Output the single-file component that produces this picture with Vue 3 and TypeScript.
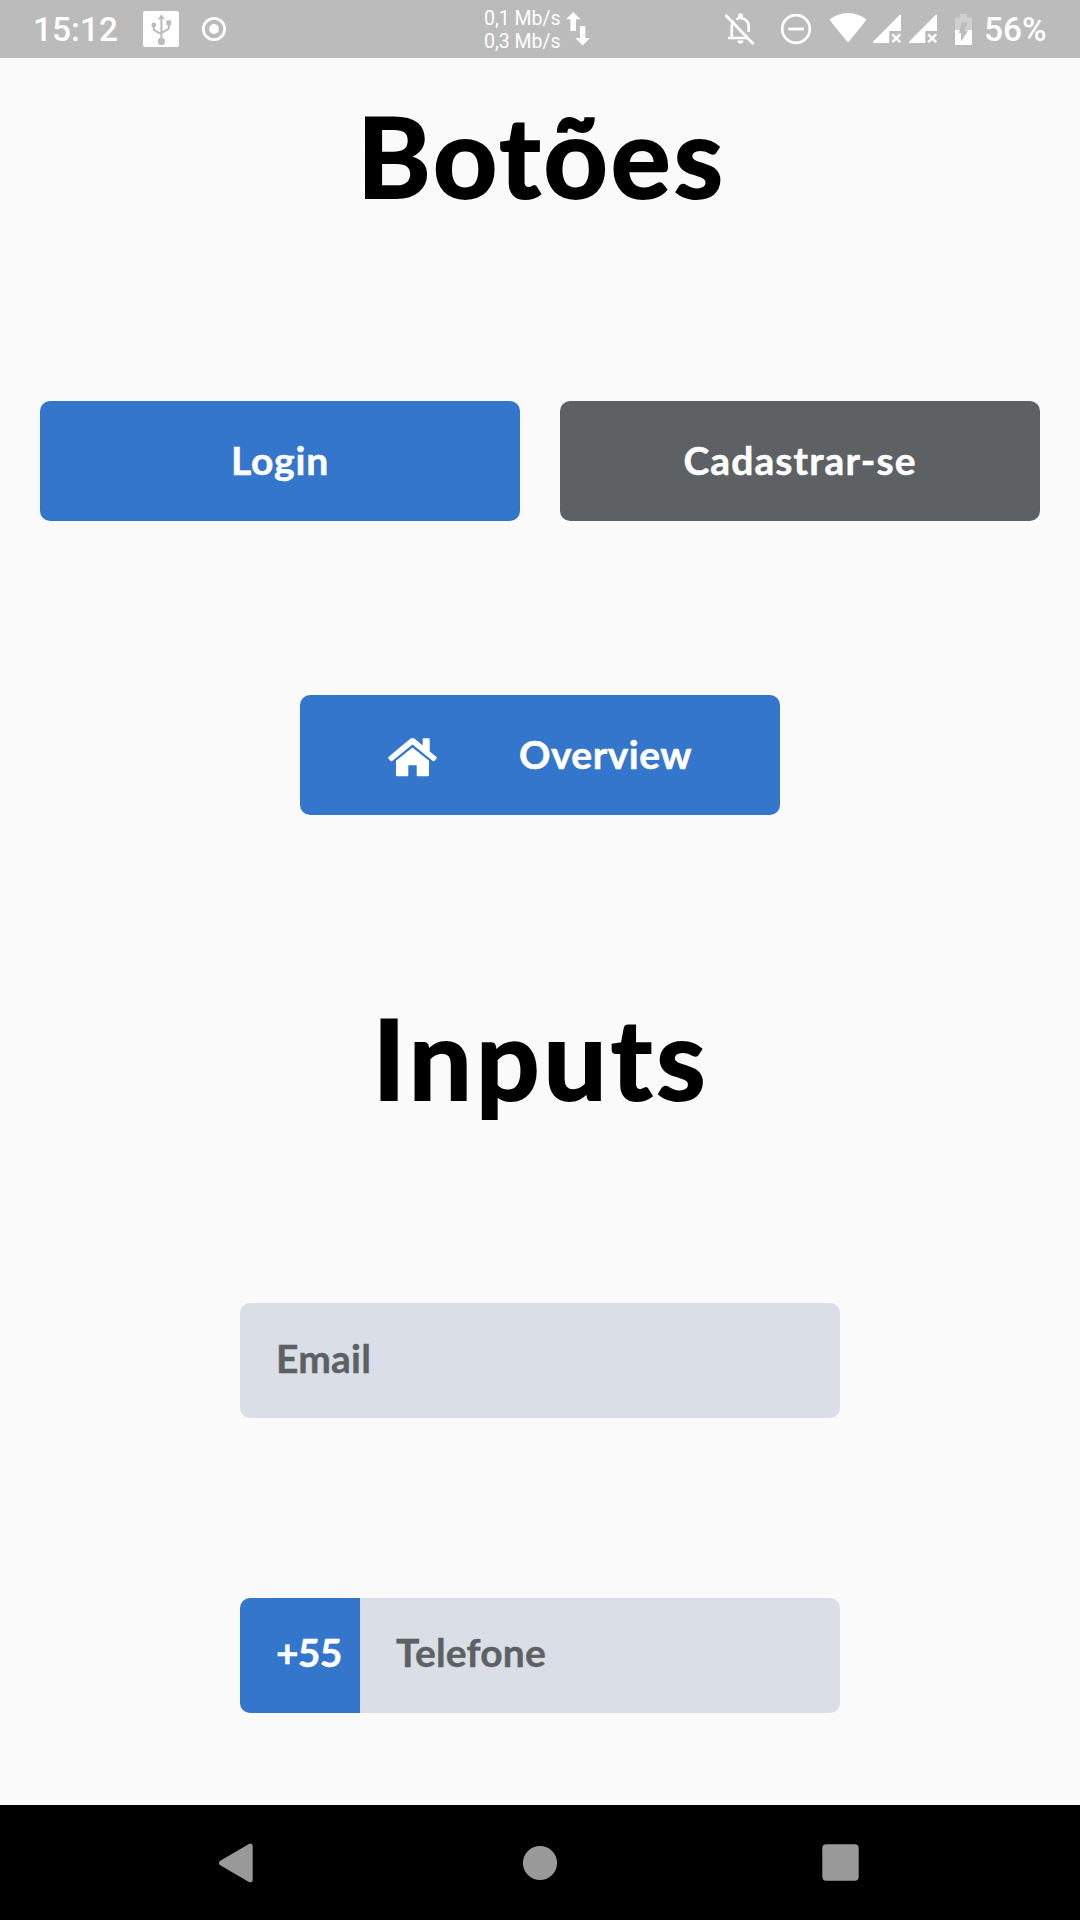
<script setup lang="ts">
interface ButtonItem {
  label: string
  tone: 'primary' | 'neutral'
  cls: string
}

const buttons: ButtonItem[] = [
  { label: 'Login', tone: 'primary', cls: 'login' },
  { label: 'Cadastrar-se', tone: 'neutral', cls: 'signup' },
]
const rates: string[] = ['0,1 Mb/s', '0,3 Mb/s']
</script>

<template>
  <div class="screen">
    <header class="status">
      <div class="side">
        <span class="clock">15:12</span>
        <svg class="usb" width="36" height="36" viewBox="0 0 36 36">
          <rect width="36" height="36" rx="2" fill="#fff" />
          <g fill="none" stroke="#bbb" stroke-width="2">
            <path d="M18.4 8v22M10.8 14v4.2q0 1 1 1.4l6.4 3.2M25.8 13v4q0 1-1 1.4l-6.4 3.4" />
          </g>
          <g fill="#bbb">
            <path d="M18.4 3.4 22 8.2h-7.2z" />
            <circle cx="10.8" cy="14" r="2.4" />
            <rect x="23.4" y="9.3" width="4.8" height="4.8" />
            <circle cx="18.4" cy="30.4" r="3.6" />
          </g>
        </svg>
        <svg class="ring" width="26" height="26" viewBox="0 0 26 26">
          <circle cx="13" cy="13" r="10.7" fill="none" stroke="#fff" stroke-width="2.8" />
          <circle cx="13" cy="13" r="4.9" fill="#fff" />
        </svg>
      </div>

      <div class="network">
        <div class="rates">
          <span v-for="rate in rates" :key="rate">{{ rate }}</span>
        </div>
        <svg width="24" height="34" viewBox="0 0 24 34" fill="#fff">
          <path d="M7.200 0 14.400 7.200H10V19H4.400V7.200H0z" />
          <path d="M14 14h5.300v12H24L16.700 33.400 9.400 26H14z" />
        </svg>
      </div>

      <div class="side right">
        <svg width="32" height="34" viewBox="0 0 32 34">
          <g fill="none" stroke="#fff" stroke-width="2.600">
            <path d="M4 26H24M7.800 26V14.500Q8 10.500 10 9M12.200 7.500Q15.500 5 19 6.500 24.700 8.500 24.700 14.500V20" />
            <path d="M1.500 3 29.500 32" stroke-width="2.900" />
          </g>
          <path d="M14 5V3.800a2.500 2.500 0 0 1 5 0V5zM13.300 28.500h6.200a3.100 3.100 0 0 1-6.200 0z" fill="#fff" />
        </svg>
        <svg class="dnd" width="32" height="32" viewBox="0 0 32 32" fill="none" stroke="#fff">
          <circle cx="16" cy="16" r="13.800" stroke-width="2.700" />
          <path d="M8.300 16h15.600" stroke-width="2.900" />
        </svg>
        <svg class="wifi" width="38" height="30" viewBox="0 0 38 30">
          <path d="M.4 6.800Q8.500 0 19 0t18.600 6.800L20 28.400q-1 1.200-2 0z" fill="#fff" />
        </svg>
        <svg v-for="slot in 2" :key="slot" class="signal" width="28" height="30" viewBox="0 0 28 30">
          <path d="M28 1.200V17H16.300V29H1Q-.5 28.800.5 27.300L26.500 1Q27.600.2 28 1.200z" fill="#fff" />
          <path d="m19.300 20.300 7.900 7.900m0-7.900-7.900 7.900" stroke="#fff" stroke-width="2.500" fill="none" />
        </svg>
        <svg class="battery" width="17" height="31" viewBox="0 0 17 31">
          <path d="M5.200 0h6.600v3.500H16q1 0 1 1V16H0V4.500q0-1 1-1h4.200z" fill="#fff" opacity=".3" />
          <path d="M0 16h17v14q0 1-1 1H1q-1 0-1-1z" fill="#fff" />
          <path d="M7 8.500h5.800l-3.300 8h3.600L6 27.500V19H4z" fill="#bbb" />
        </svg>
        <span class="percent">56%</span>
      </div>
    </header>

    <main class="content">
      <h1 class="title botoes">Botões</h1>

      <div class="row pair">
        <button v-for="b in buttons" :key="b.label" class="btn" :class="[b.tone, b.cls]" type="button">
          <span>{{ b.label }}</span>
        </button>
      </div>

      <div class="row single">
        <button class="btn primary overview" type="button">
          <svg width="49" height="39" viewBox="0 0 49 39" fill="#fff">
            <path d="M22.300.8q2.200-1.400 4.400 0l8 6.700V1.200q0-1 1-1h5q1 0 1 1v12.200l6.600 5.400q.9.800.2 1.700l-2 2.400q-.8.800-1.700 0L24.500 6.600 4.200 22.900q-.9.800-1.700 0l-2-2.400q-.7-.9.200-1.700z" />
            <path d="M24.500 9.400 41 22.700V37q0 1.200-1.200 1.200H29.700q-1 0-1-1V27.300h-8.400v9.900q0 1-1 1H9.200Q8 38.200 8 37V22.700z" />
          </svg>
          <span>Overview</span>
        </button>
      </div>

      <h1 class="title inputs">Inputs</h1>

      <div class="row email-row">
        <div class="field"><span class="placeholder email">Email</span></div>
      </div>
      <div class="row phone-row">
        <div class="field">
          <span class="prefix">+55</span>
          <span class="placeholder phone">Telefone</span>
        </div>
      </div>
    </main>

    <nav class="nav">
      <svg width="36" height="42" viewBox="0 0 36 42">
        <path d="M3.500 21 32.200 4.200V37.800z" fill="#999" stroke="#999" stroke-width="5" stroke-linejoin="round" />
      </svg>
      <svg class="home-key" width="36" height="36" viewBox="0 0 36 36"><circle cx="18" cy="18" r="17.100" fill="#999" /></svg>
      <svg width="37" height="37" viewBox="0 0 37 37"><rect x=".3" y=".3" width="36.400" height="36.400" rx="4" fill="#999" /></svg>
    </nav>
  </div>
</template>

<style>
body {
  margin: 0;
  background: #fafafa;
}
</style>

<style scoped>
.screen {
  width: 1080px;
  height: 1920px;
  display: flex;
  flex-direction: column;
  overflow: hidden;
  background: #fafafa;
  font-family: Lato, "Open Sans", sans-serif;
}
svg {
  display: block;
  flex: none;
}
.status {
  height: 58px;
  flex: none;
  background: #bbb;
  color: #fff;
  font-family: Roboto, sans-serif;
  display: grid;
  grid-template-columns: 484px 1fr auto;
  grid-template-rows: 58px;
}
.side {
  display: flex;
  align-items: center;
}
.clock,
.percent {
  box-sizing: border-box;
  font-size: 33.5px;
  font-weight: 500;
  line-height: 58px;
  padding-top: 1px;
  height: 58px;
  white-space: nowrap;
}
.clock {
  width: 143px;
  padding-left: 33px;
}
.ring {
  margin-left: 22px;
}
.network {
  display: flex;
  align-items: center;
}
.network svg {
  margin-left: 6px;
}
.rates {
  width: 76px;
  display: flex;
  flex-direction: column;
  padding-top: 1px;
  font-size: 19.5px;
  line-height: 23px;
  white-space: nowrap;
}
.right {
  padding-right: 34px;
}
.dnd {
  margin-left: 24px;
}
.wifi {
  margin: -2px 6px 0 17px;
}
.signal {
  margin-right: 8px;
}
.signal + .battery {
  margin-left: 10px;
}
.battery {
  margin-right: 12px;
}
.percent {
  width: 62px;
}
.content {
  height: 1747px;
  flex: none;
}
.title {
  margin: 0;
  font-size: 112px;
  line-height: 140px;
  height: 140px;
  font-weight: 700;
  color: #000;
  text-align: center;
  -webkit-text-stroke: 2px #000;
}
.botoes {
  padding: 27px 0 2px 3px;
  letter-spacing: 3px;
}
.row {
  display: flex;
  justify-content: center;
}
.pair {
  gap: 40px;
  margin-top: 174px;
}
.btn {
  width: 480px;
  height: 120px;
  border: 0;
  padding: 0 0 2px;
  border-radius: 10px;
  display: flex;
  align-items: center;
  justify-content: center;
  color: #fff;
  font: 700 39px/48px Lato, sans-serif;
  -webkit-text-stroke: 0.5px currentColor;
}
.login {
  letter-spacing: 0.8px;
}
.signup {
  letter-spacing: 1.1px;
}
.primary {
  background: #3476cc;
}
.neutral {
  background: #5d6163;
}
.single {
  margin-top: 174.300px;
}
.overview {
  gap: 82px;
  letter-spacing: 0.5px;
}
.overview svg {
  margin-top: 7px;
}
.inputs {
  margin-top: 172px;
  padding: 0 0 2px 2px;
  letter-spacing: 4px;
}
.email-row {
  margin-top: 174px;
}
.phone-row {
  margin-top: 179.500px;
}
.field {
  width: 600px;
  height: 115px;
  border-radius: 10px;
  background: #dadee6;
  display: flex;
  align-items: center;
  overflow: hidden;
  font-weight: 700;
  font-size: 39px;
  line-height: 111px;
  -webkit-text-stroke: 0.4px currentColor;
}
.placeholder {
  height: 115px;
  padding-left: 36px;
  color: #5d6163;
  letter-spacing: 0.2px;
}
.phone-row .field {
  line-height: 109px;
}
.prefix {
  width: 84px;
  padding-left: 36px;
  height: 115px;
  background: #3476cc;
  color: #fff;
  letter-spacing: -0.8px;
}
.nav {
  flex: 1;
  background: #000;
  display: flex;
  align-items: center;
  justify-content: space-between;
  padding: 0 221.5px 0 218px;
}
.home-key {
  margin-left: 4px;
}
</style>
